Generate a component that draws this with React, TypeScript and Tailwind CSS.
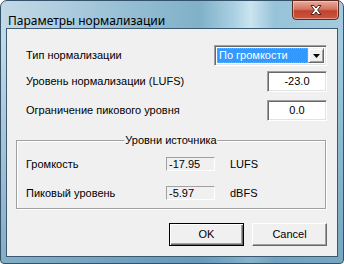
import React from 'react';

const uiFont = { fontFamily: '"Liberation Sans", Arial, sans-serif' };

const Edit = ({ value }: { value: string }) => (
  <div className="w-[60px] h-[21px] flex items-center justify-center bg-white border border-t-[#a0a0a0] border-l-[#a0a0a0] border-r-white border-b-white shadow-[inset_1px_1px_0_#696969,inset_-1px_-1px_0_#e3e3e3] text-[11px] text-black">
    {value}
  </div>
);

const ReadOnly = ({ value }: { value: string }) => (
  <div className="w-[49px] h-[14px] flex items-center pl-[2px] bg-[#f0f0f0] border border-t-[#a0a0a0] border-l-[#a0a0a0] border-r-white border-b-white text-[11px] leading-none text-black">
    {value}
  </div>
);

const Combo = () => (
  <div className="w-[113px] h-[21px] flex bg-white border border-t-[#a0a0a0] border-l-[#a0a0a0] border-r-white border-b-white shadow-[inset_1px_1px_0_#696969,inset_-1px_-1px_0_#e3e3e3] p-[2px]">
    <div className="flex-1 flex items-center bg-[#3399ff] text-white text-[11px] pl-[2px] outline-1 outline-dotted outline-[#e0a030] -outline-offset-1">
      По громкости
    </div>
    <div className="w-[16px] flex items-center justify-center bg-[#f0f0f0] border border-t-[#f0f0f0] border-l-[#f0f0f0] border-r-[#696969] border-b-[#696969] shadow-[inset_1px_1px_0_#fff,inset_-1px_-1px_0_#a0a0a0]">
      <svg width="7" height="4" viewBox="0 0 7 4">
        <path d="M0 0h7L3.5 4z" fill="#000" />
      </svg>
    </div>
  </div>
);

export default function App() {
  return (
    <div className="w-[344px] h-[264px] bg-white">
      <div className="relative w-[344px] h-[264px] flex flex-col rounded-t-[7px] rounded-b-[4px] border border-[#34536a] px-[5px] pb-[6px] bg-[linear-gradient(180deg,rgba(120,170,200,0)_0px,rgba(120,170,200,0)_40px,rgba(80,135,170,0.55)_100%),linear-gradient(90deg,#c2d9e7_0%,#b2cfdf_15%,#92bcd2_40%,#80b1c9_58%,#a9d0e2_68%,#cbe4ef_73%,#97c3d8_80%,#a3cbdd_100%)]">
        <div className="h-[27px] pt-[6px] pl-[2px]">
          <span className="text-[12px] leading-[16px] text-black" style={{ fontFamily: '"Noto Sans", "Open Sans", sans-serif' }}>
            Параметры нормализации
          </span>
        </div>

        <div className="absolute top-[-1px] right-[4px] w-[47px] h-[20px] flex items-center justify-center rounded-b-[4px] border border-[#5b2a20] bg-[linear-gradient(180deg,#e8aa9c_0%,#d47561_45%,#c0432c_55%,#c9563e_100%)] shadow-[inset_0_0_0_1px_rgba(255,220,210,0.5)]">
          <svg width="14" height="12" viewBox="0 0 14 12">
            <path d="M2 1.5h3l2 2.5 2-2.5h3l-3.3 4.5 3.3 4.5h-3l-2-2.5-2 2.5h-3l3.3-4.5z" fill="#fff" stroke="#4a2620" strokeWidth="1" strokeLinejoin="round" />
          </svg>
        </div>

        <div className="flex-1 flex flex-col border border-[#3b5970] bg-[#f0f0f0] text-[11px] text-black" style={uiFont}>
          <div className="mt-[16px] ml-[19px] mr-[10px] h-[21px] flex items-center justify-between">
            <span>Тип нормализации</span>
            <Combo />
          </div>
          <div className="mt-[5px] ml-[19px] mr-[10px] h-[21px] flex items-center justify-between">
            <span>Уровень нормализации (LUFS)</span>
            <Edit value="-23.0" />
          </div>
          <div className="mt-[8px] ml-[19px] mr-[10px] h-[21px] flex items-center justify-between">
            <span>Ограничение пикового уровня</span>
            <Edit value="0.0" />
          </div>

          <div className="relative mt-[19px] ml-[9px] w-[310px] h-[69px] border border-[#a0a0a0] shadow-[inset_1px_1px_0_#fff,1px_1px_0_#fff]">
            <span className="absolute top-[-8px] left-1/2 -translate-x-1/2 px-[1px] bg-[#f0f0f0] leading-[14px] whitespace-nowrap">
              Уровни источника
            </span>
            <div className="mt-[16px] h-[14px] pl-[9px] flex items-center">
              <span className="w-[140px]">Громкость</span>
              <ReadOnly value="-17.95" />
              <span className="ml-[15px]">LUFS</span>
            </div>
            <div className="mt-[15px] h-[14px] pl-[9px] flex items-center">
              <span className="w-[140px]">Пиковый уровень</span>
              <ReadOnly value="-5.97" />
              <span className="ml-[15px]">dBFS</span>
            </div>
          </div>

          <div className="mt-[14px] mr-[10px] flex justify-end gap-[8px]">
            <button className="w-[75px] h-[23px] bg-[#f0f0f0] border border-black shadow-[inset_1px_1px_0_#fff,inset_-1px_-1px_0_#696969,inset_-2px_-2px_0_#a0a0a0] text-[11px]">
              OK
            </button>
            <button className="w-[75px] h-[23px] bg-[#f0f0f0] border border-t-white border-l-white border-r-[#696969] border-b-[#696969] shadow-[inset_-1px_-1px_0_#a0a0a0] text-[11px]">
              Cancel
            </button>
          </div>
        </div>
      </div>
    </div>
  );
}
